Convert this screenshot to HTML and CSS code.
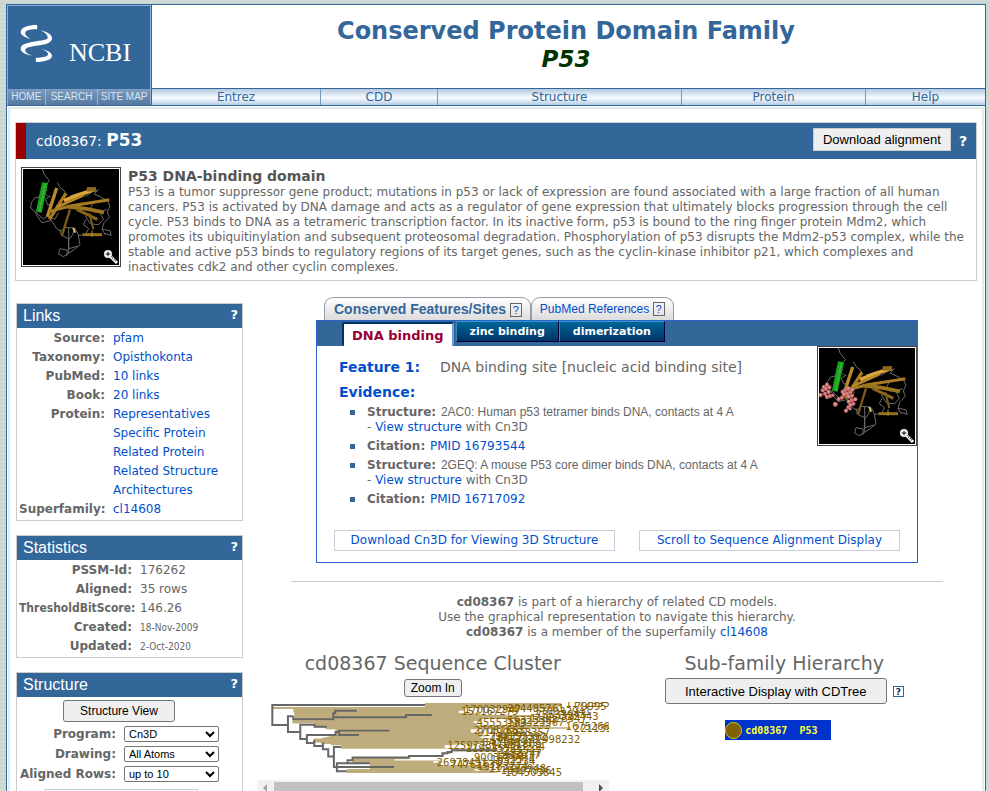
FILE: index.html
```html
<!DOCTYPE html>
<html lang="en">
<head>
<meta charset="utf-8">
<title>CDD Conserved Protein Domain Family: P53</title>
<link rel="stylesheet" href="styles.css">
</head>
<body>
<svg class="defs" aria-hidden="true">
  <symbol id="protein" viewBox="9 9 288 288">
    <rect x="9" y="9" width="288" height="288" fill="#000"/>
    <g fill="none" stroke="#6b6b6b" stroke-width="3">
      <path d="M67 9 72 24 88 44 78 56M47 135 58 150 70 158 84 150 96 166 110 188 122 196 136 184M62 92 44 96 34 110 32 126 44 136 52 152 66 170 92 164M112 50 120 64 136 78 130 92M236 70 222 84 240 92 262 104 270 120 262 138 268 154 252 170 246 190 256 206M246 190 270 194 274 208 252 202M90 90 76 100 84 118 100 108M150 90 170 84 196 90 214 80M136 184 164 186 174 204 180 236 164 250 146 262 130 272 116 264 120 248 142 252 140 270M146 186 146 262M176 208 196 206 206 188 190 176 198 160M120 190 124 208 146 218M164 186 158 206 146 222 146 248 176 240M196 150 212 174 236 176 250 160 240 140 260 130M220 110 210 130 226 140M84 150 104 160 116 140"/>
    </g>
    <g stroke-linecap="butt" fill="none">
      <path d="M110 66 82 152" stroke="#b98828" stroke-width="10"/>
      <path d="M138 82 88 160" stroke="#a87b22" stroke-width="10"/>
      <path d="M132 104 176 86 228 70" stroke="#dfa63a" stroke-width="11"/>
      <path d="M200 70H228" stroke="#8d6a1f" stroke-width="13"/>
      <path d="M90 136 150 120 268 101" stroke="#a87b22" stroke-width="9"/>
      <path d="M110 124 190 88" stroke="#b98828" stroke-width="8"/>
      <path d="M140 122 196 128 252 139" stroke="#9c731f" stroke-width="11"/>
      <path d="M170 130 232 160" stroke="#8a651b" stroke-width="9"/>
      <path d="M208 142 220 190" stroke="#7c5b18" stroke-width="6"/>
      <path d="M150 130 126 208" stroke="#7c5b18" stroke-width="7"/>
      <path d="M188 206H246" stroke="#95701f" stroke-width="9"/>
      <path d="M216 194V212" stroke="#c39531" stroke-width="3"/>
      <path d="M159 186 166 200" stroke="#e5d85a" stroke-width="5"/>
    </g>
    <path d="M66 49 84 52 65 140 48 136Z" fill="#16a41b"/>
    <path d="M74 51 80 52 61 139 55 138Z" fill="#24bd27"/>
    <path d="M63 68 84 74M56 90 76 86 92 92M52 118 68 122" fill="none" stroke="#666" stroke-width="2"/>
  </symbol>
  <symbol id="magnify" viewBox="0 0 48 48">
    <path d="M21 21 42 42" stroke="#fff" stroke-width="9"/>
    <path d="M24 22 40 38" stroke="#333" stroke-width="4" stroke-dasharray="3 3"/>
    <circle cx="15" cy="15" r="12" fill="#fff"/>
    <circle cx="15" cy="15" r="12" fill="none" stroke="#777" stroke-width="2" stroke-dasharray="3 3"/>
    <path d="M15 8V22M8 15H22" stroke="#000" stroke-width="3"/>
  </symbol>
</svg>

<div class="frame">
  <header class="masthead">
    <div class="brand">
      <a class="logo" href="#">
        <svg class="helix" viewBox="60 72 100 118" aria-hidden="true"><path d="M112 75C85 75 62 82 62 97C62 107 80 115 92 117C80 110 74 104 76 97C80 89 95 87 112 88ZM122 91C140 95 157 103 157 115C157 130 135 134 110 138C90 141 78 144 76 150C74 157 84 163 97 168C78 165 62 158 62 146C62 132 85 128 110 124C130 121 144 120 144 113C144 104 135 97 122 91ZM124 148C145 152 157 160 157 168C157 180 135 187 108 187L108 174C125 174 145 170 145 164C145 157 137 152 124 148Z" fill="#fff"/></svg>
        <span>NCBI</span>
      </a>
      <nav class="quick"><a href="#">HOME</a><a href="#">SEARCH</a><a href="#">SITE MAP</a></nav>
    </div>
    <div class="banner">
      <h1>Conserved Protein Domain Family<br><i>P53</i></h1>
      <nav class="topnav"><a href="#">Entrez</a><a href="#">CDD</a><a href="#">Structure</a><a href="#">Protein</a><a href="#">Help</a></nav>
    </div>
  </header>

  <div class="content">
    <section class="summary">
      <div class="summary-bar">
        <h2>cd08367: <b>P53</b></h2>
        <button class="download" type="button">Download alignment</button>
        <a class="help" href="#">?</a>
      </div>
      <div class="summary-body">
        <a class="thumb" href="#" aria-label="Structure"><svg class="pic"><use href="#protein"/></svg><svg class="glass"><use href="#magnify"/></svg></a>
        <div class="about">
          <h3>P53 DNA-binding domain</h3>
          <p>P53 is a tumor suppressor gene product; mutations in p53 or lack of expression are found associated with a large fraction of all human cancers. P53 is activated by DNA damage and acts as a regulator of gene expression that ultimately blocks progression through the cell cycle. P53 binds to DNA as a tetrameric transcription factor. In its inactive form, p53 is bound to the ring finger protein Mdm2, which promotes its ubiquitinylation and subsequent proteosomal degradation. Phosphorylation of p53 disrupts the Mdm2-p53 complex, while the stable and active p53 binds to regulatory regions of its target genes, such as the cyclin-kinase inhibitor p21, which complexes and inactivates cdk2 and other cyclin complexes.</p>
        </div>
      </div>
    </section>

    <div class="columns">
      <aside class="sidebar">
        <section class="box">
          <div class="box-bar"><h2>Links</h2><a class="help" href="#">?</a></div>
          <dl class="pairs links">
            <dt>Source:</dt><dd><a href="#">pfam</a></dd>
            <dt>Taxonomy:</dt><dd><a href="#">Opisthokonta</a></dd>
            <dt>PubMed:</dt><dd><a href="#">10 links</a></dd>
            <dt>Book:</dt><dd><a href="#">20 links</a></dd>
            <dt>Protein:</dt><dd><a href="#">Representatives</a></dd>
            <dd><a href="#">Specific Protein</a></dd>
            <dd><a href="#">Related Protein</a></dd>
            <dd><a href="#">Related Structure</a></dd>
            <dd><a href="#">Architectures</a></dd>
            <dt>Superfamily:</dt><dd><a href="#">cl14608</a></dd>
          </dl>
        </section>
        <section class="box">
          <div class="box-bar"><h2>Statistics</h2><a class="help" href="#">?</a></div>
          <dl class="pairs stats">
            <dt>PSSM-Id:</dt><dd>176262</dd>
            <dt>Aligned:</dt><dd>35 rows</dd>
            <dt class="narrow">ThresholdBitScore:</dt><dd>146.26</dd>
            <dt>Created:</dt><dd class="date">18-Nov-2009</dd>
            <dt>Updated:</dt><dd class="date">2-Oct-2020</dd>
          </dl>
        </section>
        <section class="box">
          <div class="box-bar"><h2>Structure</h2><a class="help" href="#">?</a></div>
          <form class="viewer">
            <button type="button">Structure View</button>
            <div class="field"><label for="program">Program:</label><select id="program"><option>Cn3D</option></select></div>
            <div class="field"><label for="drawing">Drawing:</label><select id="drawing"><option>All Atoms</option></select></div>
            <div class="field"><label for="rows">Aligned Rows:</label><select id="rows"><option>up to 10</option></select></div>
            <div class="note"></div>
          </form>
        </section>
      </aside>

      <main>
        <div class="tabs">
          <a class="tab current" href="#">Conserved Features/Sites <span class="q">?</span></a><a class="tab" href="#">PubMed References <span class="q">?</span></a>
        </div>
        <section class="panel">
          <div class="subtabs"><a class="on" href="#">DNA binding</a><a href="#">zinc binding</a><a href="#">dimerization</a></div>
          <div class="panel-body">
            <div class="feature">
              <h3><b>Feature 1:</b><span>DNA binding site [nucleic acid binding site]</span></h3>
              <h3><b>Evidence:</b></h3>
              <ul>
                <li><b>Structure:</b> <small>2AC0: Human p53 tetramer binds DNA, contacts at 4 A</small><br>- <a href="#">View structure</a> with Cn3D</li>
                <li><b>Citation:</b> <a href="#">PMID 16793544</a></li>
                <li><b>Structure:</b> <small>2GEQ: A mouse P53 core dimer binds DNA, contacts at 4 A</small><br>- <a href="#">View structure</a> with Cn3D</li>
                <li><b>Citation:</b> <a href="#">PMID 16717092</a></li>
              </ul>
            </div>
            <a class="thumb" href="#" aria-label="DNA binding site">
              <svg class="pic"><use href="#protein"/></svg>
              <svg class="pic over" viewBox="9 9 288 288">
                <g fill="#d98080" stroke="#8c4444" stroke-width="1">
                  <circle cx="14" cy="150" r="6"/><circle cx="20" cy="136" r="6"/><circle cx="24" cy="126" r="6"/><circle cx="33" cy="119" r="6"/><circle cx="40" cy="127" r="6"/><circle cx="30" cy="132" r="6"/><circle cx="38" cy="141" r="6"/><circle cx="27" cy="146" r="6"/><circle cx="33" cy="156" r="6"/><circle cx="42" cy="153" r="6"/><circle cx="50" cy="151" r="5"/><circle cx="58" cy="178" r="7"/><circle cx="68" cy="162" r="6"/><circle cx="78" cy="158" r="6"/><circle cx="84" cy="148" r="6"/><circle cx="80" cy="140" r="6"/><circle cx="88" cy="134" r="6"/><circle cx="97" cy="130" r="6"/><circle cx="109" cy="134" r="6"/><circle cx="103" cy="142" r="6"/><circle cx="93" cy="146" r="6"/><circle cx="98" cy="155" r="6"/><circle cx="108" cy="152" r="6"/><circle cx="118" cy="163" r="6"/><circle cx="107" cy="166" r="6"/><circle cx="98" cy="170" r="6"/><circle cx="112" cy="176" r="6"/><circle cx="103" cy="180" r="6"/><circle cx="97" cy="187" r="6"/><circle cx="90" cy="197" r="6"/><circle cx="102" cy="191" r="5"/>
                </g>
                <g fill="#f6b9b9"><circle cx="22" cy="124" r="2"/><circle cx="32" cy="117" r="2"/><circle cx="37" cy="139" r="2"/><circle cx="32" cy="154" r="2"/><circle cx="57" cy="175" r="2"/><circle cx="83" cy="146" r="2"/><circle cx="96" cy="128" r="2"/><circle cx="108" cy="132" r="2"/><circle cx="97" cy="153" r="2"/><circle cx="117" cy="161" r="2"/><circle cx="97" cy="168" r="2"/><circle cx="102" cy="178" r="2"/><circle cx="89" cy="195" r="2"/><circle cx="13" cy="148" r="2"/></g>
              </svg>
              <svg class="glass"><use href="#magnify"/></svg>
            </a>
          </div>
          <div class="actions"><a href="#">Download Cn3D for Viewing 3D Structure</a><a href="#">Scroll to Sequence Alignment Display</a></div>
        </section>
        <hr>
        <p class="intro"><b>cd08367</b> is part of a hierarchy of related CD models.<br>Use the graphical representation to navigate this hierarchy.<br><b>cd08367</b> is a member of the superfamily <a href="#">cl14608</a></p>
        <div class="halves">
          <section class="cluster">
            <h2>cd08367 Sequence Cluster</h2>
            <button type="button">Zoom In</button>
            <svg class="tree" viewBox="18 186 1056 228">
              <path fill="#bfac7c" d="M523 189H932V200H905V206H760V204H640V212H624V218H636V225H850V231H800V237H690V243H669V249H680V256H900V262H960V266H740V268H672V272H660V278H690V285H705V292H715V299H700V306H690V312H600V318H582V324H640V329H603L590 340L575 348H475V353H305V372H570V376H610V382H690V388H715V394H740V399H288V388H370V384H430V376H357V366H430V358H475V350H575V342H600V334H740V326H270V316H240V308H188V297H250V288H322V282H254V276H416V268H228V262H190V250H125V241H247V235H466V226H251V216H318V209H247V218H127V207H62V201H523Z"/>
              <path fill="#bfac7c" d="M130 205H624V222H466V229H247V241H130ZM247 220H690V246H247ZM125 243H669V268H228L190 250H125ZM254 262H660V300H188L254 285ZM188 296H700V310L582 316V326H270V312H215ZM357 362H570V376H690L740 399H288V388H357Z"/>
              <g fill="none" stroke="#666" stroke-width="6"><path d="M523 195H64V255H111M127 229H111V276H148M127 229V238H247V220H253V212H318M247 238V232H466V225H543M148 276V254H191V260H228M148 254V297H168V285H254V276H265V272H416M265 276V285H324M168 297V309H190V300M190 309V318H216V308M216 318V328H232V350H249V321H270M249 350V381H258V370H290V361H305V353H475V348H575V340H590V336H603V331H740M290 361V370H357M258 370V394H288M258 381H430"/></g>
              <g stroke="#fff" stroke-width="5"><path d="M624 216H640M669 246H685M660 270H672M582 318H596M690 292H718M700 303H720M548 366H562M597 375H612M672 390H690M640 210H655"/></g>
              <g class="ids"><text x="945" y="202">1172995</text><text x="973" y="209">79995</text><text x="770" y="215">204485761</text><text x="640" y="219">170032947</text><text x="632" y="226">157167279</text><text x="850" y="226">170032941</text><text x="855" y="233">73533943</text><text x="930" y="240">322443</text><text x="838" y="245">118823947</text><text x="678" y="257">45553583</text><text x="770" y="257">189323367</text><text x="945" y="270">16752669</text><text x="970" y="276">221139</text><text x="770" y="251">59323367</text><text x="670" y="281">27081653</text><text x="680" y="289">91490362</text><text x="765" y="289">1913357</text><text x="715" y="300">294157392</text><text x="740" y="303">86721302</text><text x="720" y="309">14657231</text><text x="875" y="310">998232</text><text x="695" y="318">84216891</text><text x="720" y="323">71231809</text><text x="590" y="328">12597231</text><text x="645" y="335">119535731</text><text x="750" y="329">7433234</text><text x="740" y="342">3245547</text><text x="760" y="350">453747</text><text x="735" y="356">1833077</text><text x="670" y="363">90037794</text><text x="720" y="368">1832374</text><text x="558" y="378">26978491</text><text x="600" y="383">74761635</text><text x="680" y="390">19183274</text><text x="740" y="374">552234</text><text x="715" y="397">112397948</text><text x="750" y="401">18407836</text><text x="763" y="407">184503845</text></g>
            </svg>
            <div class="scroll"><i class="left"></i><i class="grip"></i><i class="right"></i></div>
          </section>
          <section class="family">
            <h2>Sub-family Hierarchy</h2>
            <div class="launch"><button type="button">Interactive Display with CDTree</button><a class="qbox" href="#">?</a></div>
            <a class="node" href="#"><i></i>cd08367&nbsp; P53</a>
          </section>
        </div>
      </main>
    </div>
  </div>
</div>
</body>
</html>
```
FILE: styles.css
```css
* { box-sizing: border-box; }
html, body { height: 100%; }
body {
  margin: 0;
  padding: 4px 4px 0 6px;
  overflow: hidden;
  font: 12px/15px Verdana, "DejaVu Sans", sans-serif;
  color: #666;
  background: repeating-linear-gradient(#cfd9d6 0 3px, #c8d3d0 3px 4px);
}
h1, h2, h3, p, ul, dl, dd { margin: 0; padding: 0; font-weight: normal; }
a { color: #0050cc; text-decoration: none; }
button { font-family: Arial, "Liberation Sans", sans-serif; color: #000; background: #efefef; border: 1px solid #767676; border-radius: 3px; padding: 0; }
.defs { position: absolute; width: 0; height: 0; }
.help { color: #fff; font-weight: bold; }

.frame { background: #fff; border: 1px solid #369; min-height: 100%; }
.masthead { display: flex; border-bottom: 1px solid #369; }
.brand { width: 144px; border: 1px solid #8db0d4; border-bottom: 0; border-right: 1px solid #8db0d4; background: #369; display: flex; flex-direction: column; }
.logo { flex: 1; display: flex; align-items: flex-start; gap: 16px; padding: 18px 0 0 12px; color: #fff; font: 26px/30px "Liberation Serif", serif; }
.logo span { padding-top: 14px; }
.helix { width: 33px; height: 39px; }
.quick { display: flex; height: 16px; background: linear-gradient(#7c9cc0, #54789f); }
.quick a { flex: 37 1 0; text-align: center; color: #dbe6f2; font: 10px/16px Arial, "Liberation Sans", sans-serif; white-space: nowrap; }
.quick a + a { flex-grow: 52; border-left: 1px solid #9ab6d4; }
.banner { flex: 1; display: flex; flex-direction: column; border-left: 1px solid #369; }
.banner h1 { height: 83px; padding: 12px 5px 0 0; text-align: center; color: #369; font-size: 24px; line-height: 28px; font-weight: bold; }
.banner i { color: #030; font-size: 23px; }
.topnav { display: grid; grid-template-columns: 168fr 117fr 244fr 184fr 120fr; border-top: 1px solid #369; background: linear-gradient(#b4c9e0, #f7fbff 55%, #b7cce3); }
.topnav a { height: 16px; line-height: 17px; text-align: center; color: #369; }
.topnav a + a { border-left: 1px solid #7398c0; }

.content { margin: 1px 1px 0; border: 2px solid #e0ecec; border-bottom: 0; padding: 13px 5px 0; }
.summary { border: 1px solid #ccc; }
.summary-bar { display: flex; align-items: center; height: 36px; padding-right: 9px; background: #369; border-left: 10px solid #900; color: #fff; }
.summary-bar h2 { flex: 1; padding-left: 10px; font-size: 14px; }
.summary-bar b { font-size: 17px; }
.summary-bar .help { margin-left: 8px; font-size: 14px; }
.download { width: 138px; height: 23px; border-radius: 0; border-color: #ccc; font-size: 13px; margin-bottom: 3px; }
.summary-body { display: flex; gap: 7px; padding: 8px 5px 5px; }
.about { padding-top: 1px; }
.about h3 { font-size: 14px; line-height: 17px; font-weight: bold; color: #555; }
.thumb { position: relative; flex: none; width: 100px; height: 100px; border: 1px solid #444; padding: 1px; background: #fff; }
.pic { display: block; width: 96px; height: 96px; }
.over { position: absolute; left: 1px; top: 1px; }
.glass { position: absolute; right: 1px; bottom: 1px; width: 16px; height: 16px; }

.columns { display: flex; gap: 14px; padding-left: 1px; }
.sidebar { width: 227px; padding-top: 22px; display: flex; flex-direction: column; gap: 14px; }
.box { border: 1px solid #ccc; }
.box-bar { display: flex; justify-content: space-between; height: 24px; padding: 0 4px 0 6px; background: #369; }
.box-bar h2 { color: #fff; font: 16px/24px Arial, "Liberation Sans", sans-serif; }
.box-bar .help { font-size: 13px; line-height: 22px; }
.pairs { display: grid; column-gap: 8px; padding: 1px 0 1px 2px; line-height: 19px; }
.pairs dt { grid-column: 1; text-align: right; font-weight: bold; }
.pairs dd { grid-column: 2; }
.links { grid-template-columns: 86px 1fr; }
.stats { grid-template-columns: 113px 1fr; }
.stats .narrow { font-family: "DejaVu Sans Condensed", sans-serif; white-space: nowrap; }
.stats .date { font-family: "DejaVu Sans Condensed", sans-serif; font-size: 10px; }
.viewer { padding-top: 3px; }
.viewer button { display: block; width: 112px; height: 22px; margin-left: 46px; font-size: 12px; }
.viewer .field { display: flex; align-items: center; gap: 8px; height: 20px; }
.viewer button + .field { margin-top: 2px; }
.field label { width: 99px; text-align: right; font-weight: bold; white-space: nowrap; }
.field select { width: 95px; height: 16px; padding: 0; font: 11px Arial, "Liberation Sans", sans-serif; color: #000; background: #fff; border: 1px solid #767676; border-radius: 2px; }
.note { margin: 5px 44px 0 28px; height: 40px; border: 1px solid #ccc; }

main { flex: 1; padding-top: 16px; }
.tabs { display: flex; margin: 0 59px; padding-left: 8px; }
.tab { height: 23px; padding: 0 8px; border: 1px solid #99a; border-bottom: 0; border-radius: 9px 9px 0 0; background: linear-gradient(#fff, #dcdcdc); font: 12px/22px Arial, "Liberation Sans", sans-serif; white-space: nowrap; }
.tab.current { padding-left: 9px; font-size: 14px; font-weight: bold; color: #369; }
.q { display: inline-block; width: 12px; height: 14px; border: 1px solid #666; font: 11px/12px Arial, "Liberation Sans", sans-serif; text-align: center; color: #0050cc; }
.panel { margin: 0 59px; border: 1px solid #2a62c8; }
.subtabs { display: flex; align-items: flex-start; height: 25px; padding-left: 25px; background: #369; }
.subtabs a { height: 21px; padding: 0 13px; border: 1px solid #003; border-top-color: #39c; border-left-color: #4682b4; background: linear-gradient(#069, #036); color: #fff; font-size: 11px; font-weight: bold; line-height: 19px; }
.subtabs .on { height: 24px; margin: 1px 2px 0 0; padding: 0 8px; border: 2px solid #036; border-right-color: #6aa0d8; border-bottom: 0; border-radius: 2px; background: #fff; color: #903; font-size: 13px; line-height: 23px; }
.panel-body { display: flex; justify-content: space-between; height: 184px; }
.feature { padding: 9px 0 0 22px; }
.feature h3 { font-size: 14px; line-height: 25px; }
.feature h3 b { display: inline-block; width: 101px; color: #0050cc; }
.feature ul { list-style: none; padding-left: 28px; }
.feature li { position: relative; margin-bottom: 4px; }
.feature li::before { content: ""; position: absolute; left: -17px; top: 5px; width: 5px; height: 5px; background: #369; }
.feature ul b { margin-right: 1px; }
.feature small { font: 12px/15px Arial, "Liberation Sans", sans-serif; }
.actions { display: flex; gap: 24px; padding: 0 17px 11px; }
.actions a { border: 1px solid #ccd; height: 21px; line-height: 19px; text-align: center; flex: 281 1 0; white-space: nowrap; }
.actions a + a { flex-grow: 261; }
hr { margin: 18px 34px 0; border: 0; border-top: 1px solid #ccc; }
.intro { padding-top: 13px; text-align: center; }

.halves { display: grid; grid-template-columns: 1fr 1fr; padding: 11px 17px 0 0; }
.halves section { text-align: center; }
.halves h2 { font-size: 19px; line-height: 24px; }
.cluster button { display: block; width: 58px; height: 18px; margin: 4px auto 5px; font-size: 12px; line-height: 16px; }
.tree { display: block; width: 100%; }
.ids { font: 30px Verdana, "DejaVu Sans", sans-serif; fill: #806000; }
.scroll { display: flex; align-items: center; height: 17px; margin-top: 2px; padding: 0 6px; background: #f1f1f1; }
.scroll .grip { flex: 1; margin: 0 16px 0 7px; height: 13px; background: #c1c1c1; }
.scroll .left, .scroll .right { border: 4px solid transparent; width: 4px; border-left: 0; border-right-color: #a3a3a3; }
.scroll .right { border-right: 0; border-left: 4px solid #505050; }
.launch { display: flex; justify-content: center; align-items: center; gap: 6px; margin: 3px 0 16px; }
.launch button { width: 222px; height: 26px; font-size: 13px; }
.qbox { width: 11px; height: 11px; border: 1px solid #369; font-size: 9px; line-height: 10px; font-weight: bold; color: #036; }
.node { display: inline-flex; align-items: center; gap: 3px; width: 106px; height: 20px; margin-right: 12px; background: #03c; color: #ff3; font: bold 10px "DejaVu Sans Mono", "Liberation Mono", monospace; white-space: nowrap; }
.node i { width: 17px; height: 17px; border: 1px solid #cc0; border-radius: 50%; background: #806000; }
```
